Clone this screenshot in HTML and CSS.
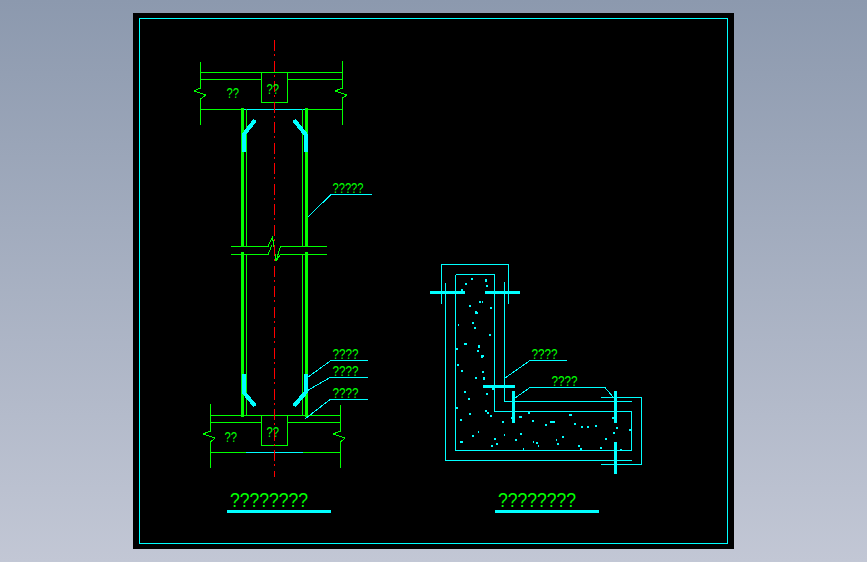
FILE: index.html
```html
<!DOCTYPE html>
<html lang="en">
  <head>
    <meta charset="UTF-8" />
    <title>Drawing</title>
    <link rel="stylesheet" href="styles.css">
  </head>
  <body>
    <svg class="sheet" viewBox="133 13 601 536" width="601" height="536">
      <!-- frame -->
      <rect class="cyan" x="139.5" y="18.5" width="588" height="525" />

      <!-- left detail: wall section -->
      <path class="green" d="M200.5 62V88L194 91L206 95L200.5 99V125M342.5 61V88L335 91L347 95L342.5 98V125
        M200 72.5H342M200 79.5H261M288 79.5H342M261.5 72V102.5H287.5V72M200 109.5H243M307 109.5H342" />
      <path class="cyan" d="M244 109.5H305" />
      <path class="green" d="M246.5 109V246M302.5 109V246M246.5 254V415M302.5 254V415
        M231 246.5H268L272.5 237L276 261L280.5 246.5H327M231 254.5H268L272 245M276 261L280.5 254.5H327" />
      <path class="green wall" d="M242.5 108V247M306.5 108V247M242.5 252V417M306.5 252V417" />
      <path class="green" d="M210.5 404V431L203 434L215 438L210.5 442V468M340.5 405V431L333 434L345 438L340.5 442V468
        M210 415.5H340M210 422.5H261M288 422.5H340M261.5 415V445.5H287.5V415M210 452.5H246M303 452.5H340" />
      <path class="cyan" d="M246 452.5H303" />
      <path class="red" d="M274.5 40V477" />
      <path class="cyan brace" d="M243.5 152V135L255 120M306 152V135L294 120M243.5 374V392L255 406M306 374V392L294 406" />
      <path class="cyan" d="M308 217L331 194.5H372M308 377L331 360.5H368M305 392L330 377.5H368M305 419L330 399.5H368" />
      <path class="cyan wall" d="M227 511.5H331" />

      <text class="note" x="332.5" y="193" textLength="31" lengthAdjust="spacingAndGlyphs">?????</text>
      <text class="note" x="226.5" y="98" textLength="12.5" lengthAdjust="spacingAndGlyphs">??</text>
      <text class="note" x="266.5" y="94" textLength="12.5" lengthAdjust="spacingAndGlyphs">??</text>
      <text class="note" x="332.5" y="359" textLength="26" lengthAdjust="spacingAndGlyphs">????</text>
      <text class="note" x="332.5" y="375.5" textLength="26" lengthAdjust="spacingAndGlyphs">????</text>
      <text class="note" x="332.5" y="398" textLength="26" lengthAdjust="spacingAndGlyphs">????</text>
      <text class="note" x="224.5" y="441.5" textLength="12.5" lengthAdjust="spacingAndGlyphs">??</text>
      <text class="note" x="266.5" y="437" textLength="12.5" lengthAdjust="spacingAndGlyphs">??</text>
      <text class="title" x="230" y="506.5" textLength="78" lengthAdjust="spacingAndGlyphs">????????</text>

      <!-- right detail: corner section -->
      <path class="cyan" d="M441.5 304V264.5H508.5V304M445.5 283V460.5H632M455.5 275V450.5H631.5V411.5H494.5V274.5H455.5
        M504.5 282V401.5H632M601 397.5H641.5V464.5H601
        M505 378L530 360.5H567M515 398L530 387.5H605L613 397" />
      <path class="cyan wall" d="M430 292.5H465M485 292.5H520M483 386.5H515M513.5 391V423M615.5 391V423M615.5 442V474M495 511.5H599" />
      <path class="cyan speck" d="M471 279h2M472 278v2M486 279v3M465 284h2M486 286h2M461 290h2M479 302h2M482 302h1M469 306h2M490 308h2M475 313h3M476 311v2
        M458 325h1M472 323h2M474 328h2M489 335h2M464 344h3M479 345v3M477 351h2M456 349h2M482 356h2M482 355v3M457 365h2M461 371h2M482 372h2M475 378h2M483 379h2M484 377v3
        M492 389h2M464 392h2M486 394h2M468 399h2M456 408h2M485 411h2M487 413h2M469 414h2M490 416h2M460 420h2M502 422h2M511 418h2M519 417h3M528 413h2M532 421h2
        M545 425h2M550 422h3M553 422h2M569 415h3M574 424h2M581 427h2M587 427h2M595 426h2M616 428h2M629 430h3M613 433h2M612 418h2
        M478 432h1M472 436h2M460 442h3M494 439h2M496 444h2M491 446h2M504 435h1M520 434h2M515 440h2M533 442h1M536 443h2M538 446h1M556 440h1M557 444h2M562 437h2M578 446h2M580 449h2M600 448h2M605 439h2M620 450h2M523 449h1" />

      <text class="note" x="531.5" y="359" textLength="26" lengthAdjust="spacingAndGlyphs">????</text>
      <text class="note" x="551.5" y="386" textLength="26" lengthAdjust="spacingAndGlyphs">????</text>
      <text class="title" x="498" y="506.5" textLength="78" lengthAdjust="spacingAndGlyphs">????????</text>
    </svg>
  </body>
</html>
```

FILE: styles.css
```css
/*global*/
* {
  margin: 0;
  padding: 0;
  box-sizing: border-box;
}

body {
  height: 100vh;
  display: flex;
  align-items: center;
  justify-content: center;
  overflow: hidden;
  background: linear-gradient(#8c99ae, #c2c7d5);
}

/*drawing*/
.sheet {
  display: block;
  background-color: #000;
  shape-rendering: crispEdges;
}

.sheet path,
.sheet rect {
  fill: none;
  stroke-width: 1;
}

.green {
  stroke: #0f0;
}

.cyan {
  stroke: #0ff;
}

.sheet .red {
  stroke: #f00;
  stroke-width: 1;
  stroke-dasharray: 11 3 2 4.5;
}

.sheet .wall {
  stroke-width: 3;
}

.sheet .brace {
  stroke-width: 4;
}

.sheet .speck {
  stroke-width: 2;
}

/*text*/
.note,
.title {
  font-family: "Liberation Sans", sans-serif;
  fill: #0f0;
}

.note {
  font-size: 14px;
}

.title {
  font-size: 20px;
}
```
